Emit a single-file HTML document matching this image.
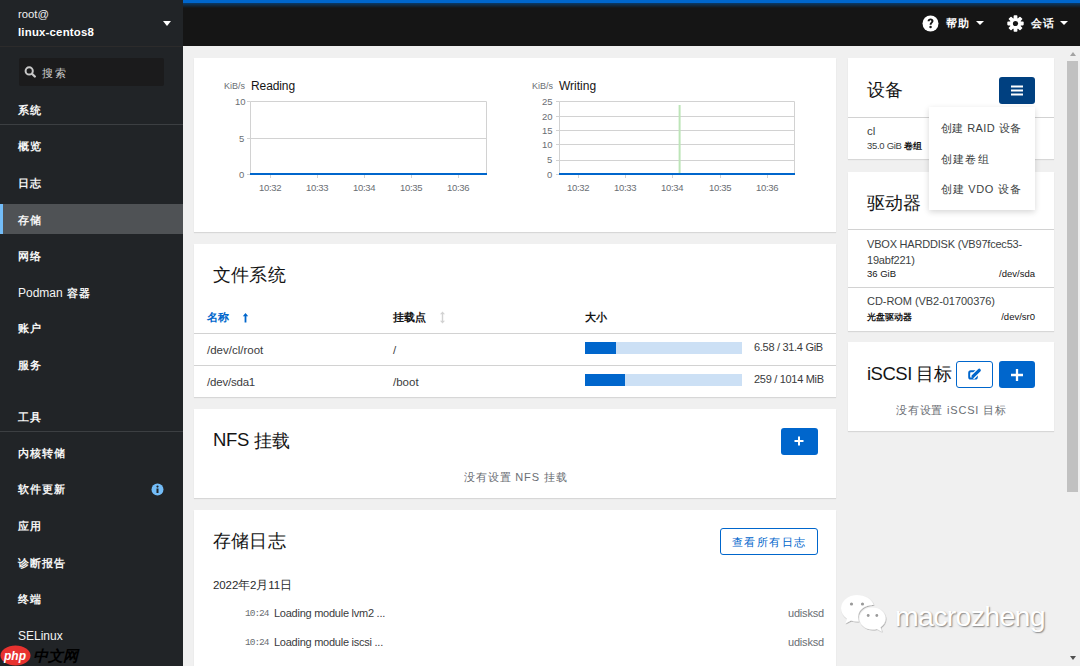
<!DOCTYPE html>
<html><head><meta charset="utf-8">
<style>
*{margin:0;padding:0;box-sizing:border-box}
html,body{width:1080px;height:666px;overflow:hidden;background:#f0f0f0;font-family:"Liberation Sans",sans-serif;color:#151515}
.a{position:absolute;white-space:nowrap;line-height:1}
#side{position:absolute;left:0;top:0;width:183px;height:666px;background:#212427}
#top{position:absolute;left:183px;top:0;width:897px;height:46px;background:#151515}
.nav{position:absolute;left:18px;color:#f4f4f4;font-size:11px;line-height:1;letter-spacing:.9px;font-weight:bold}
.nav .l{font-size:12px;letter-spacing:0;font-weight:normal}
.card{position:absolute;background:#fff;box-shadow:0 1px 1px rgba(3,3,3,.10)}
.sep{position:absolute;height:1px;background:#d2d2d2}
.t18{font-size:18.5px}
.btn{position:absolute;border-radius:3px;background:#06c}
.mut{color:#6a6e73}
</style></head><body>
<div id="side">
  <div class="a" style="left:18px;top:9px;font-size:11.3px;color:#f0f0f0">root@</div>
  <div class="a" style="left:18px;top:27px;font-size:11.4px;letter-spacing:.2px;font-weight:bold;color:#fff">linux-centos8</div>
  <div style="position:absolute;left:163px;top:21px;width:0;height:0;border-left:4px solid transparent;border-right:4px solid transparent;border-top:5px solid #fff"></div>
  <div style="position:absolute;left:0;top:46px;width:183px;height:1px;background:#2c2b2b"></div>
  <div style="position:absolute;left:19px;top:58px;width:145px;height:28px;background:#1b1b1c;border-radius:2px"></div>
  <svg style="position:absolute;left:24px;top:66px" width="13" height="12" viewBox="0 0 13 12"><circle cx="5.2" cy="4.9" r="3.6" fill="none" stroke="#c8c8c8" stroke-width="2"/><path d="M8 7.7L10.8 10.5" stroke="#c8c8c8" stroke-width="2.3" stroke-linecap="round"/></svg>
  <div class="a" style="left:42px;top:68px;font-size:11px;letter-spacing:2.3px;color:#cfcfcf">搜索</div>
  <div class="nav" style="top:105px">系统</div>
  <div style="position:absolute;left:0;top:124px;width:183px;height:1px;background:#3c3f42"></div>
  <div class="nav" style="top:141px">概览</div>
  <div class="nav" style="top:178px">日志</div>
  <div style="position:absolute;left:0;top:204px;width:183px;height:30px;background:#4f5255"></div>
  <div style="position:absolute;left:0;top:204px;width:3px;height:30px;background:#73bcf7"></div>
  <div class="nav" style="top:215px">存储</div>
  <div class="nav" style="top:251px">网络</div>
  <div class="nav" style="top:287px"><span class="l">Podman</span> 容器</div>
  <div class="nav" style="top:323px">账户</div>
  <div class="nav" style="top:360px">服务</div>
  <div class="nav" style="top:412px">工具</div>
  <div style="position:absolute;left:0;top:431px;width:183px;height:1px;background:#3c3f42"></div>
  <div class="nav" style="top:448px">内核转储</div>
  <div class="nav" style="top:484px">软件更新</div>
  <svg style="position:absolute;left:151px;top:483px" width="13" height="13" viewBox="0 0 13 13"><circle cx="6.5" cy="6.5" r="6" fill="#73bcf7"/><rect x="5.5" y="5.5" width="2" height="4.5" fill="#212427"/><circle cx="6.5" cy="3.6" r="1.1" fill="#212427"/></svg>
  <div class="nav" style="top:521px">应用</div>
  <div class="nav" style="top:558px">诊断报告</div>
  <div class="nav" style="top:594px">终端</div>
  <div class="nav" style="top:630px"><span class="l">SELinux</span></div>
</div>
<div id="top">
  <div style="position:absolute;left:0;top:0;width:897px;height:3px;background:#06c"></div>
  <div style="position:absolute;left:0;top:3px;width:897px;height:5px;background:linear-gradient(#0b3a66,#151515)"></div>
  <svg style="position:absolute;left:739px;top:15px" width="17" height="17" viewBox="0 0 17 17"><circle cx="8.5" cy="8.5" r="8" fill="#fff"/><path d="M5.6 6.3C5.6 4.6 6.9 3.6 8.6 3.6C10.3 3.6 11.5 4.6 11.5 6.1C11.5 7.9 9.5 8.1 9.5 9.8H7.6C7.6 7.4 9.4 7.2 9.4 6.2C9.4 5.7 9.1 5.3 8.5 5.3C7.9 5.3 7.6 5.8 7.6 6.3Z" fill="#151515"/><circle cx="8.55" cy="12" r="1.25" fill="#151515"/></svg>
  <div class="a" style="left:763px;top:18px;font-size:11px;letter-spacing:1.2px;font-weight:bold;color:#fff">帮助</div>
  <div style="position:absolute;left:793px;top:21px;width:0;height:0;border-left:4px solid transparent;border-right:4px solid transparent;border-top:4.5px solid #fff"></div>
  <svg style="position:absolute;left:824px;top:15px" width="17" height="17" viewBox="0 0 17 17"><g fill="#fff" transform="translate(8.5 8.5)"><circle r="5.6"/><rect x="-1.9" y="-8.2" width="3.8" height="16.4" rx="0.8"/><rect x="-1.9" y="-8.2" width="3.8" height="16.4" rx="0.8" transform="rotate(45)"/><rect x="-1.9" y="-8.2" width="3.8" height="16.4" rx="0.8" transform="rotate(90)"/><rect x="-1.9" y="-8.2" width="3.8" height="16.4" rx="0.8" transform="rotate(135)"/></g><circle cx="8.5" cy="8.5" r="2.6" fill="#151515"/></svg>
  <div class="a" style="left:848px;top:18px;font-size:11px;letter-spacing:1.2px;font-weight:bold;color:#fff">会话</div>
  <div style="position:absolute;left:877px;top:21px;width:0;height:0;border-left:4px solid transparent;border-right:4px solid transparent;border-top:4.5px solid #fff"></div>
</div>

<!-- MAIN -->
<div class="card" style="left:194px;top:58px;width:642px;height:174px">
</div>
<div class="a mut" style="left:224px;top:82px;font-size:9px">KiB/s</div>
<div class="a" style="left:251px;top:80px;font-size:12px;letter-spacing:-.1px;color:#151515">Reading</div>
<svg style="position:absolute;left:230px;top:95px" width="270" height="105">
 <g stroke="#d2d2d2" stroke-width="1" fill="none">
  <path d="M20.5 6.5H256.5V79M20.5 6.5V79M17 6.5H20.5M17 43.5H256.5M17 79.5H20.5"/>
  <path d="M40.5 80V83M87.5 80V83M134.5 80V83M181.5 80V83M228.5 80V83"/>
 </g>
 <rect x="20" y="78" width="237" height="2" fill="#06c"/>
</svg>
<div class="a mut" style="left:235px;top:97px;font-size:9.5px">10</div>
<div class="a mut" style="left:239px;top:134px;font-size:9.5px">5</div>
<div class="a mut" style="left:239px;top:170px;font-size:9.5px">0</div>
<div class="a mut" style="left:259px;top:183px;font-size:9.5px;letter-spacing:-.3px">10:32</div>
<div class="a mut" style="left:306px;top:183px;font-size:9.5px;letter-spacing:-.3px">10:33</div>
<div class="a mut" style="left:353px;top:183px;font-size:9.5px;letter-spacing:-.3px">10:34</div>
<div class="a mut" style="left:400px;top:183px;font-size:9.5px;letter-spacing:-.3px">10:35</div>
<div class="a mut" style="left:447px;top:183px;font-size:9.5px;letter-spacing:-.3px">10:36</div>

<div class="a mut" style="left:532px;top:82px;font-size:9px">KiB/s</div>
<div class="a" style="left:559px;top:80px;font-size:12px;color:#151515">Writing</div>
<svg style="position:absolute;left:540px;top:95px" width="270" height="105">
 <g stroke="#d2d2d2" stroke-width="1" fill="none">
  <path d="M19.5 6.5H254.5V79M19.5 6.5V79M16 6.5H19.5M16 21.5H254.5M16 35.5H254.5M16 49.5H254.5M16 65.5H254.5M16 79.5H19.5"/>
  <path d="M38.5 80V83M85.5 80V83M132.5 80V83M180.5 80V83M227.5 80V83"/>
 </g>
 <rect x="138.6" y="10" width="2" height="69" fill="#bde5b8"/>
 <rect x="19" y="78" width="236" height="2" fill="#06c"/>
</svg>
<div class="a mut" style="left:542px;top:97px;font-size:9.5px">25</div>
<div class="a mut" style="left:542px;top:112px;font-size:9.5px">20</div>
<div class="a mut" style="left:542px;top:126px;font-size:9.5px">15</div>
<div class="a mut" style="left:542px;top:140px;font-size:9.5px">10</div>
<div class="a mut" style="left:547px;top:155px;font-size:9.5px">5</div>
<div class="a mut" style="left:547px;top:170px;font-size:9.5px">0</div>
<div class="a mut" style="left:567px;top:183px;font-size:9.5px;letter-spacing:-.3px">10:32</div>
<div class="a mut" style="left:614px;top:183px;font-size:9.5px;letter-spacing:-.3px">10:33</div>
<div class="a mut" style="left:661px;top:183px;font-size:9.5px;letter-spacing:-.3px">10:34</div>
<div class="a mut" style="left:709px;top:183px;font-size:9.5px;letter-spacing:-.3px">10:35</div>
<div class="a mut" style="left:756px;top:183px;font-size:9.5px;letter-spacing:-.3px">10:36</div>

<div class="card" style="left:194px;top:244px;width:642px;height:153px"></div>
<div class="a" style="left:213px;top:267px;font-size:17.5px;letter-spacing:.2px">文件系统</div>
<div class="a" style="left:207px;top:312px;font-size:11px;font-weight:bold;color:#06c">名称</div>
<svg style="position:absolute;left:242px;top:312px" width="7" height="11" viewBox="0 0 7 11"><path d="M3.5 1L0.8 4.2H2.6V10.5H4.4V4.2H6.2Z" fill="#06c"/></svg>
<div class="a" style="left:393px;top:312px;font-size:11px;font-weight:bold">挂载点</div>
<svg style="position:absolute;left:439px;top:311px" width="7" height="13" viewBox="0 0 7 13"><path d="M3.5 0.5L1 3.3H2.8V9.7H1L3.5 12.5L6 9.7H4.2V3.3H6Z" fill="#d2d2d2"/></svg>
<div class="a" style="left:585px;top:312px;font-size:11px;font-weight:bold">大小</div>
<div class="sep" style="left:194px;top:333px;width:642px"></div>
<div class="a" style="left:207px;top:345px;font-size:11.5px;color:#3a3b3d">/dev/cl/root</div>
<div class="a" style="left:393px;top:345px;font-size:11.5px;color:#3a3b3d">/</div>
<div style="position:absolute;left:585px;top:342px;width:157px;height:12px;background:#cce0f5"></div>
<div style="position:absolute;left:585px;top:342px;width:31px;height:12px;background:#06c"></div>
<div class="a" style="left:754px;top:342px;font-size:11px;letter-spacing:-.3px;color:#3a3b3d">6.58 / 31.4 GiB</div>
<div class="sep" style="left:194px;top:365px;width:642px"></div>
<div class="a" style="left:207px;top:377px;font-size:11.5px;letter-spacing:-.2px;color:#3a3b3d">/dev/sda1</div>
<div class="a" style="left:393px;top:377px;font-size:11.5px;color:#3a3b3d">/boot</div>
<div style="position:absolute;left:585px;top:374px;width:157px;height:12px;background:#cce0f5"></div>
<div style="position:absolute;left:585px;top:374px;width:40px;height:12px;background:#06c"></div>
<div class="a" style="left:754px;top:374px;font-size:11px;letter-spacing:-.3px;color:#3a3b3d">259 / 1014 MiB</div>

<div class="card" style="left:194px;top:409px;width:642px;height:89px"></div>
<div class="a" style="left:213px;top:431px;font-size:18.5px;letter-spacing:-.3px">NFS <span style="font-size:17.5px;letter-spacing:0;position:relative;top:.5px">挂载</span></div>
<div class="btn" style="left:781px;top:428px;width:37px;height:27px"></div>
<svg style="position:absolute;left:793px;top:435px" width="12" height="12" viewBox="0 0 12 12"><path d="M6 1.5V10.5M1.5 6H10.5" stroke="#fff" stroke-width="2"/></svg>
<div class="a mut" style="left:464px;top:472px;font-size:11px;letter-spacing:.85px">没有设置 NFS 挂载</div>

<div class="card" style="left:194px;top:510px;width:642px;height:170px"></div>
<div class="a" style="left:213px;top:533px;font-size:17.5px;letter-spacing:.2px">存储日志</div>
<div style="position:absolute;left:720px;top:528px;width:98px;height:27px;border:1px solid #06c;border-radius:3px"></div>
<div class="a" style="left:732px;top:537px;font-size:11px;letter-spacing:1.4px;color:#06c">查看所有日志</div>
<div class="a" style="left:213px;top:580px;font-size:11.5px;letter-spacing:-.1px;color:#2a2b2d">2022年2月11日</div>
<div class="a mut" style="left:245px;top:609px;font-family:'Liberation Mono',monospace;font-size:9.5px;letter-spacing:-1px">10:24</div>
<div class="a" style="left:274px;top:608px;font-size:11px;letter-spacing:-.25px;color:#3a3b3d">Loading module lvm2 ...</div>
<div class="a mut" style="left:788px;top:608px;font-size:11px;letter-spacing:-.2px">udisksd</div>
<div class="a mut" style="left:245px;top:638px;font-family:'Liberation Mono',monospace;font-size:9.5px;letter-spacing:-1px">10:24</div>
<div class="a" style="left:274px;top:637px;font-size:11px;letter-spacing:-.25px;color:#3a3b3d">Loading module iscsi ...</div>
<div class="a mut" style="left:788px;top:637px;font-size:11px;letter-spacing:-.2px">udisksd</div>

<!-- RIGHT -->
<div class="card" style="left:848px;top:58px;width:206px;height:101px"></div>
<div class="a" style="left:867px;top:82px;font-size:17.5px;letter-spacing:.2px">设备</div>
<div class="btn" style="left:999px;top:77px;width:36px;height:27px;background:#004080"></div>
<svg style="position:absolute;left:1011px;top:85px" width="12" height="11" viewBox="0 0 12 11"><path d="M0 1.5H12M0 5.5H12M0 9.5H12" stroke="#fff" stroke-width="2"/></svg>
<div class="sep" style="left:848px;top:117px;width:206px"></div>
<div class="a" style="left:867px;top:126px;font-size:11.5px;color:#3c3f42">cl</div>
<div class="a" style="left:867px;top:141px;font-size:9.5px;letter-spacing:-.3px;color:#3c3f42">35.0 GiB <span style="font-weight:bold;letter-spacing:0;font-size:9px;color:#151515">卷组</span></div>

<div class="card" style="left:848px;top:172px;width:206px;height:159px"></div>
<div class="a" style="left:867px;top:195px;font-size:17.5px;letter-spacing:.1px">驱动器</div>
<div class="sep" style="left:848px;top:229px;width:206px"></div>
<div class="a" style="left:867px;top:236px;font-size:11px;letter-spacing:-.2px;line-height:16px;color:#3c3f42">VBOX HARDDISK (VB97fcec53-<br>19abf221)</div>
<div class="a" style="left:867px;top:269px;font-size:9.5px">36 GiB</div>
<div class="a" style="left:1035px;top:269px;font-size:9.5px;transform:translateX(-100%)">/dev/sda</div>
<div class="sep" style="left:848px;top:287px;width:206px"></div>
<div class="a" style="left:867px;top:296px;font-size:11px;letter-spacing:-.05px;color:#3c3f42">CD-ROM (VB2-01700376)</div>
<div class="a" style="left:867px;top:313px;font-size:9px;font-weight:bold">光盘驱动器</div>
<div class="a" style="left:1035px;top:312px;font-size:9.5px;transform:translateX(-100%)">/dev/sr0</div>

<div class="card" style="left:848px;top:342px;width:206px;height:89px"></div>
<div class="a" style="left:867px;top:365px;font-size:18.5px;letter-spacing:-.5px">iSCSI <span style="font-size:17.5px;letter-spacing:0">目标</span></div>
<div style="position:absolute;left:956px;top:361px;width:37px;height:27px;border:1px solid #06c;border-radius:3px;background:#fff"></div>
<svg style="position:absolute;left:967px;top:368px" width="14" height="13" viewBox="0 0 14 13"><rect x="2.2" y="3.3" width="7.6" height="7.3" rx="1.6" fill="none" stroke="#06c" stroke-width="2"/><path d="M5.2 9.2L12.6 1.9" stroke="#fff" stroke-width="5.5"/><path d="M6.2 8.2L12.2 2.3" stroke="#06c" stroke-width="3.2" stroke-linecap="round"/><path d="M4.6 9.9L5.2 7.3L7.2 9.3Z" fill="#06c"/></svg>
<div class="btn" style="left:999px;top:361px;width:36px;height:27px"></div>
<svg style="position:absolute;left:1011px;top:369px" width="12" height="12" viewBox="0 0 12 12"><path d="M6 0V12M0 6H12" stroke="#fff" stroke-width="2.3"/></svg>
<div class="a mut" style="left:896px;top:405px;font-size:11px;letter-spacing:.8px">没有设置 iSCSI 目标</div>

<!-- dropdown -->
<div style="position:absolute;left:929px;top:107px;width:106px;height:103px;background:#fff;box-shadow:0 2px 6px rgba(3,3,3,.16)"></div>
<div class="a" style="left:941px;top:123px;font-size:11px;letter-spacing:.4px;color:#3c3f42">创建 RAID 设备</div>
<div class="a" style="left:941px;top:154px;font-size:11px;letter-spacing:1.2px;color:#3c3f42">创建卷组</div>
<div class="a" style="left:941px;top:184px;font-size:11px;letter-spacing:.7px;color:#3c3f42">创建 VDO 设备</div>

<!-- scrollbar -->
<div style="position:absolute;left:1067px;top:61px;width:11px;height:431px;background:#c1c1c1"></div>
<div style="position:absolute;left:1070px;top:52px;width:0;height:0;border-left:3.5px solid transparent;border-right:3.5px solid transparent;border-bottom:4px solid #a3a3a3"></div>
<div style="position:absolute;left:1070px;top:656px;width:0;height:0;border-left:3.5px solid transparent;border-right:3.5px solid transparent;border-top:4px solid #505050"></div>

<!-- watermarks -->
<svg style="position:absolute;left:838px;top:592px" width="52" height="46" viewBox="0 0 52 46">
 <defs><filter id="sh" x="-20%" y="-20%" width="140%" height="140%"><feDropShadow dx="0.6" dy="0.8" stdDeviation="0.6" flood-color="#000" flood-opacity="0.35"/></filter></defs>
 <g filter="url(#sh)">
 <path d="M19 3C10.2 3 3 9 3 16.3C3 20.5 5.3 24.2 9 26.7L7.3 31.5L13 28.6C14.9 29.2 16.9 29.5 19 29.5C19.6 29.5 20.2 29.5 20.8 29.4C20.3 28 20 26.5 20 25C20 18.2 26.6 12.9 34.7 12.9C35 12.9 35.3 12.9 35.6 12.9C34 7.2 27.2 3 19 3Z" fill="#fff"/>
 <path d="M34.5 15.5C27.3 15.5 21.5 20.4 21.5 26.5C21.5 32.6 27.3 37.5 34.5 37.5C36 37.5 37.5 37.3 38.9 36.9L43.9 39.8L42.5 35.2C45.6 33.2 47.6 30.1 47.6 26.5C47.6 20.4 41.7 15.5 34.5 15.5Z" fill="#fff"/>
 </g>
 <circle cx="13.5" cy="12" r="1.6" fill="#9a9a9a"/><circle cx="24.5" cy="12" r="1.6" fill="#9a9a9a"/>
 <circle cx="30.2" cy="23.5" r="1.4" fill="#9a9a9a"/><circle cx="38.8" cy="23.5" r="1.4" fill="#9a9a9a"/>
</svg>
<div class="a" style="left:895px;top:602px;font-size:28.5px;letter-spacing:-.7px;color:#fff;text-shadow:1px 1px 1.5px rgba(0,0,0,.45)">macrozheng</div>
<svg style="position:absolute;left:0;top:645px" width="32" height="21" viewBox="0 0 32 21"><ellipse cx="15.5" cy="10.5" rx="15" ry="10" fill="#e8322f"/><text x="4" y="15" font-family="Liberation Sans" font-style="italic" font-weight="bold" font-size="12" fill="#fff">php</text></svg>
<div class="a" style="left:33px;top:648px;font-size:15px;font-style:italic;font-weight:bold;color:#000">中文网</div>
</body></html>
